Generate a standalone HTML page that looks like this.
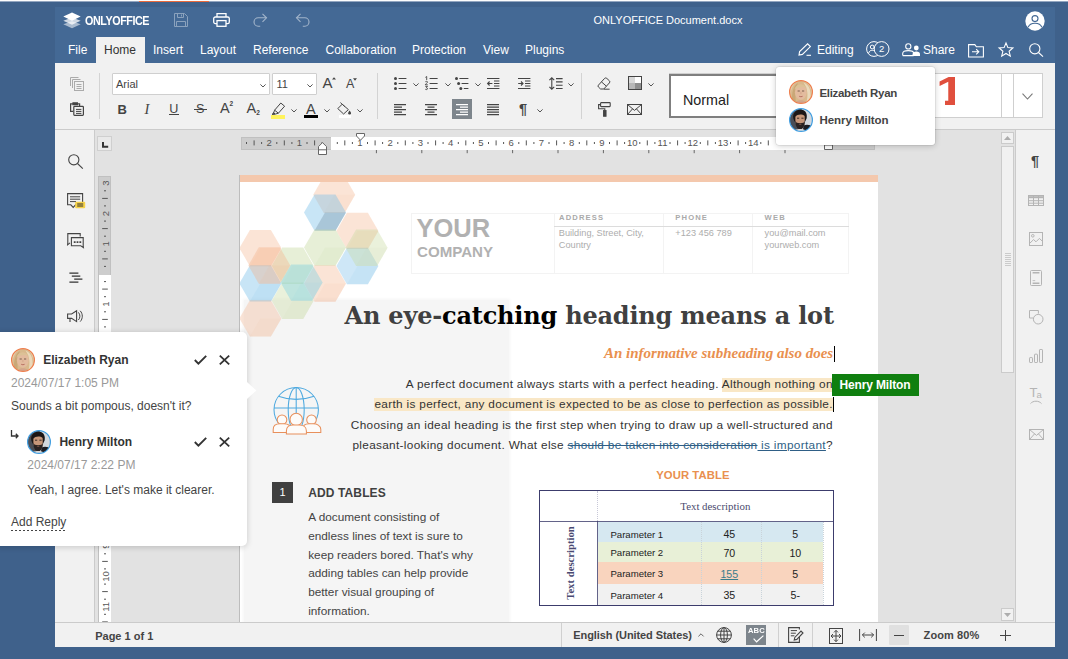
<!DOCTYPE html>
<html lang="en">
<head>
<meta charset="utf-8">
<title>ONLYOFFICE Document.docx</title>
<style>
*{box-sizing:border-box;margin:0;padding:0}
html,body{width:1068px;height:659px;overflow:hidden}
body{background:#3f618b;font-family:"Liberation Sans",Arial,sans-serif;font-size:12px;color:#444;position:relative}
.abs{position:absolute}
svg{position:absolute;overflow:visible}
#topstrip{left:0;top:0;width:1068px;height:2px;background:linear-gradient(#fdfdfd 0,#fdfdfd 1px,#93a6c0 1px,#93a6c0 2px)}
#topor{left:139px;top:1px;width:70px;height:1px;background:#ea6a3c}
#app{left:55px;top:7px;width:1000px;height:640px;background:#e2e2e2;overflow:hidden}
#hdr{left:0;top:0;width:1000px;height:56px;background:#446995}
.t{position:absolute;white-space:nowrap;line-height:1}
.w{color:#fff}
#tabhome{left:41px;top:30px;width:49px;height:27px;background:#f1f1f1}
#tb{left:0;top:56px;width:1000px;height:67px;background:#f1f1f1;border-bottom:1px solid #cbcbcb}
.sep{position:absolute;width:1px;background:#d3d3d3}
.ic{stroke:#444;fill:none;stroke-width:1}
#leftp{left:0;top:123px;width:40px;height:492px;background:#f1f1f1;border-right:1px solid #cbcbcb}
#rightp{left:960px;top:123px;width:40px;height:492px;background:#f1f1f1;border-left:1px solid #cbcbcb}
#status{left:0;top:615px;width:1000px;height:25px;background:#f1f1f1;border-top:1px solid #cbcbcb}
#page{left:184px;top:168px;width:639px;height:447px;background:#fff;border-left:1px solid #bdbdbd;overflow:hidden}
</style>
</head>
<body>
<svg width="0" height="0" style="left:0;top:0"><filter id="avb" x="-10%" y="-10%" width="120%" height="120%"><feGaussianBlur stdDeviation="0.55"/></filter></svg>
<div class="abs" id="topstrip"></div>
<div class="abs" id="topor"></div>
<div class="abs" id="app">
  <div class="abs" id="hdr"></div>
  
  <svg style="left:7.5px;top:5.3px" width="18" height="17" viewBox="0 0 17 16">
    <path d="M8.5 8.6 L0.3 11.6 L8.5 15.4 L16.7 11.6 Z" fill="#fff" opacity=".55"/>
    <path d="M8.5 5.2 L0.3 8.3 L8.5 12 L16.7 8.3 Z" fill="#fff" opacity=".75"/>
    <path d="M8.5 0.4 L0.3 4.3 L8.5 8.2 L16.7 4.3 Z" fill="#fff"/>
  </svg>
  <div class="t w" id="logotxt" style="left:29.5px;top:7.5px;font-size:12.2px;font-weight:bold;letter-spacing:-0.5px;transform:scaleX(.885);transform-origin:0 0">ONLYOFFICE</div>
  <!-- save -->
  <svg style="left:119px;top:6px;opacity:.38" width="14" height="14" viewBox="0 0 14 14" fill="none" stroke="#fff" stroke-width="1">
    <path d="M0.5 0.5 H10.5 L13.5 3.5 V13.5 H0.5 Z"/><path d="M3.5 0.5 V4.5 H9.5 V0.5"/><path d="M7.5 1.5 V3.5"/><path d="M2.5 13.5 V8.5 H11.5 V13.5"/>
  </svg>
  <!-- print -->
  <svg style="left:158px;top:6px" width="17" height="14" viewBox="0 0 17 14" fill="none" stroke="#fff" stroke-width="1.3">
    <path d="M4 4 V0.7 H13 V4"/><rect x="0.7" y="4" width="15.6" height="6.6" rx="1.6"/><rect x="4" y="7.6" width="9" height="5.7" fill="#446995"/>
  </svg>
  <!-- redo -->
  <svg style="left:198px;top:6px;opacity:.5" width="15" height="14" viewBox="0 0 15 14" fill="none" stroke="#fff" stroke-width="1.1">
    <path d="M9.5 0.8 L13.5 4.8 L9.5 8.8"/><path d="M13.3 4.8 H5.2 A4.2 4.2 0 0 0 5.2 13.2 H7.2"/>
  </svg>
  <!-- undo -->
  <svg style="left:240px;top:6px;opacity:.5" width="15" height="14" viewBox="0 0 15 14" fill="none" stroke="#fff" stroke-width="1.1">
    <path d="M5.5 0.8 L1.5 4.8 L5.5 8.8"/><path d="M1.7 4.8 H9.8 A4.2 4.2 0 0 1 9.8 13.2 H7.8"/>
  </svg>
  <div class="t w" id="doctitle" style="left:538.5px;top:8px;font-size:11px">ONLYOFFICE Document.docx</div>
  <!-- user avatar -->
  <svg style="left:969.5px;top:3.5px" width="20" height="20" viewBox="0 0 20 20">
    <circle cx="10" cy="10" r="9.7" fill="#fff"/>
    <circle cx="10" cy="7.6" r="3" fill="none" stroke="#446995" stroke-width="1.1"/>
    <path d="M3.2 16.2 C4.5 12.6 7.5 12.3 10 12.3 S15.5 12.6 16.8 16.2" fill="none" stroke="#446995" stroke-width="1.1"/>
  </svg>

  <div class="abs" id="tabhome"></div>
  
  <div class="t w" style="left:13px;top:37px">File</div>
  <div class="t" style="left:49px;top:37px;color:#333">Home</div>
  <div class="t w" style="left:98px;top:37px">Insert</div>
  <div class="t w" style="left:145px;top:37px">Layout</div>
  <div class="t w" style="left:198px;top:37px">Reference</div>
  <div class="t w" style="left:270.5px;top:37px">Collaboration</div>
  <div class="t w" style="left:357px;top:37px">Protection</div>
  <div class="t w" style="left:428px;top:37px">View</div>
  <div class="t w" style="left:470px;top:37px">Plugins</div>
  <!-- pencil -->
  <svg style="left:743px;top:36px" width="14" height="13" viewBox="0 0 14 13" fill="none" stroke="#fff" stroke-width="1.1">
    <path d="M1 12 L1.6 8.6 L9.6 0.8 L12.4 3.6 L4.4 11.4 Z"/><path d="M8.5 12.3 H13"/>
  </svg>
  <div class="t w" style="left:762px;top:37px">Editing</div>
  <!-- users -->
  <svg style="left:811px;top:34px" width="24" height="16" viewBox="0 0 24 16" fill="none" stroke="#fff" stroke-width="1">
    <circle cx="8" cy="8" r="7.4"/>
    <circle cx="15.6" cy="8" r="7.4" fill="#446995"/>
    <circle cx="6.2" cy="6" r="1.9"/><path d="M2.6 12.4 C3.2 9.6 5 9.3 6.2 9.3 S8 9.6 8.3 10"/>
    <text x="15.6" y="11.4" font-size="9.5" fill="#fff" stroke="none" text-anchor="middle" font-family="Liberation Sans, Arial, sans-serif">2</text>
  </svg>
  <!-- share -->
  <svg style="left:846.5px;top:35.5px" width="19" height="14" viewBox="0 0 19 14" fill="none" stroke="#fff" stroke-width="1.1">
    <circle cx="6.3" cy="3.4" r="2.6"/><path d="M0.7 12.6 V10.6 C0.7 8.4 2.6 7.6 6.3 7.6 S11.6 8.4 11.8 10.2 M0.7 12.6 H11.6"/>
    <circle cx="14.3" cy="5" r="2.4" fill="#fff" stroke="none"/><path d="M10.6 13 V11.3 C10.6 9.4 12 8.6 14.3 8.6 S18 9.4 18 11.3 V13 Z" fill="#fff" stroke="none"/>
  </svg>
  <div class="t w" style="left:868px;top:37px">Share</div>
  <!-- folder -->
  <svg style="left:913px;top:36.5px" width="16" height="14" viewBox="0 0 16 14" fill="none" stroke="#fff" stroke-width="1.1">
    <path d="M0.6 13 V0.6 H6.8 L8.4 2.8 H15.4 V13 Z"/><path d="M4 7.8 H10.6 M8.2 5.2 L10.8 7.8 L8.2 10.4"/>
  </svg>
  <!-- star -->
  <svg style="left:943px;top:35px" width="16" height="15" viewBox="0 0 16 15" fill="none" stroke="#fff" stroke-width="1.1" stroke-linejoin="miter">
    <path d="M8 1 L9.9 5.6 L14.9 6 L11.1 9.3 L12.3 14.1 L8 11.5 L3.7 14.1 L4.9 9.3 L1.1 6 L6.1 5.6 Z"/>
  </svg>
  <!-- search -->
  <svg style="left:974px;top:35.5px" width="15" height="14" viewBox="0 0 15 14" fill="none" stroke="#fff" stroke-width="1.1">
    <circle cx="5.8" cy="5.8" r="5.1"/><path d="M9.5 9.5 L14 13.6"/>
  </svg>

  <div class="abs" id="tb"></div>
  
  <svg style="left:15px;top:69.5px;opacity:.4" width="14" height="14" viewBox="0 0 14 14" fill="none" stroke="#444" stroke-width="1"><path d="M0.5 9 V0.5 H8.5 M2.5 11 V2.5 H10.5"/><rect x="4.5" y="4.5" width="9" height="9" fill="#f1f1f1"/><path d="M6.5 7.5 H11.5 M6.5 9.5 H11.5 M6.5 11.5 H11.5"/></svg>
  <svg style="left:15px;top:95px" width="14" height="14" viewBox="0 0 14 14" fill="none" stroke="#444" stroke-width="1.2"><path d="M3.2 9.4 H0.6 V1.8 H9.6 V4"/><path d="M3 0.9 H7.4 V2.6 H3 Z" fill="#444"/><rect x="3.8" y="4.4" width="9.6" height="9" rx="0.8" fill="#f1f1f1"/><path d="M6 7.4 H11.4 M6 9.4 H11.4 M6 11.4 H11.4" stroke-width="1"/></svg>
  <div class="sep" style="left:44px;top:66px;height:46px"></div>
  <div class="sep" style="left:322px;top:66px;height:46px"></div>
  <div class="sep" style="left:526px;top:66px;height:46px"></div>
  <div class="abs" style="left:57px;top:66px;width:158px;height:22px;background:#fff;border:1px solid #cfcfcf;border-radius:1px"></div>
  <div class="t" style="left:61px;top:72px;font-size:11px;color:#444">Arial</div>
  <svg style="left:205.0px;top:76.5px" width="6" height="4" viewBox="0 0 6 4" fill="none" stroke="#444" stroke-width="0.9"><path d="M0.4 0.4 L3 3 L5.6 0.4"/></svg>

  <div class="abs" style="left:217px;top:66px;width:45px;height:22px;background:#fff;border:1px solid #cfcfcf;border-radius:1px"></div>
  <div class="t" style="left:221.5px;top:72px;font-size:11px;color:#444">11</div>
  <svg style="left:252.0px;top:76.5px" width="6" height="4" viewBox="0 0 6 4" fill="none" stroke="#444" stroke-width="0.9"><path d="M0.4 0.4 L3 3 L5.6 0.4"/></svg>

  <div class="t" style="left:267.5px;top:68.3px;font-size:15px;color:#444">A</div>
  <svg style="left:276.6px;top:70px" width="4" height="3" viewBox="0 0 4 3"><path d="M0 2.6 L2 0.2 L4 2.6 Z" fill="#444"/></svg>
  <div class="t" style="left:291px;top:70.6px;font-size:12.5px;color:#444">A</div>
  <svg style="left:298.2px;top:70.6px" width="4" height="3" viewBox="0 0 4 3"><path d="M0 0.3 L2 2.7 L4 0.3 Z" fill="#444"/></svg>
  <div class="t" style="left:62.5px;top:96px;font-size:13px;font-weight:bold;color:#444">B</div>
  <div class="t" style="left:89.6px;top:95.4px;font-size:14.5px;font-style:italic;color:#444;font-family:'Liberation Serif',serif">I</div>
  <div class="t" style="left:114.3px;top:95.8px;font-size:12.6px;color:#444">U</div><div class="abs" style="left:114px;top:107.2px;width:10px;height:1px;background:#444"></div>
  <div class="t" style="left:141px;top:95.8px;font-size:12.6px;color:#444">S</div><div class="abs" style="left:139px;top:102px;width:12.5px;height:1px;background:#444"></div>
  <div class="t" style="left:165px;top:94.3px;font-size:14.5px;color:#444">A</div><div class="t" style="left:174.6px;top:94.4px;font-size:6.5px;font-weight:bold;color:#444">2</div>
  <div class="t" style="left:191.6px;top:94.3px;font-size:14.5px;color:#444">A</div><div class="t" style="left:201.2px;top:102.6px;font-size:6.5px;font-weight:bold;color:#444">2</div>
  <svg style="left:216px;top:94.5px" width="15" height="13" viewBox="0 0 15 13" fill="none" stroke="#444" stroke-width="1"><path d="M3.6 8.2 L9.8 1 L13.6 4.2 L7.4 11.2 Z"/><path d="M3.6 8.2 L2.6 11 L4.6 12 L7.4 11.2"/><path d="M1 12.4 L2.8 10.8 L4 12.2 Z" fill="#444"/></svg>
  <div class="abs" style="left:215.6px;top:108px;width:14.4px;height:3.5px;background:#fff35c"></div>
  <svg style="left:236.0px;top:102.0px" width="6" height="4" viewBox="0 0 6 4" fill="none" stroke="#444" stroke-width="0.9"><path d="M0.4 0.4 L3 3 L5.6 0.4"/></svg>

  <div class="t" style="left:251px;top:94.6px;font-size:14.5px;color:#444">A</div>
  <div class="abs" style="left:249px;top:108px;width:14.2px;height:3.2px;background:#000"></div>
  <svg style="left:269.0px;top:102.0px" width="6" height="4" viewBox="0 0 6 4" fill="none" stroke="#444" stroke-width="0.9"><path d="M0.4 0.4 L3 3 L5.6 0.4"/></svg>

  <svg style="left:282px;top:94.5px" width="15" height="13" viewBox="0 0 15 13" fill="none" stroke="#444" stroke-width="1"><path d="M5.2 2.2 L11.4 7.6 L6.6 12 L0.8 6.6 Z"/><path d="M3.4 0.6 L7.8 4.6"/><path d="M12.6 8.6 C13.6 10 14 10.6 14 11.2 A1.4 1.4 0 0 1 11.2 11.2 C11.2 10.6 11.6 10 12.6 8.6 Z" fill="#444" stroke="none"/></svg>
  <div class="abs" style="left:283.6px;top:108px;width:12.2px;height:3.2px;background:#fff"></div>
  <svg style="left:302.0px;top:102.0px" width="6" height="4" viewBox="0 0 6 4" fill="none" stroke="#444" stroke-width="0.9"><path d="M0.4 0.4 L3 3 L5.6 0.4"/></svg>

  <svg style="left:339px;top:70px" width="13" height="13" viewBox="0 0 13 13" fill="#444" stroke="#444"><circle cx="1.5" cy="1.5" r="1.5" stroke="none"/><circle cx="1.5" cy="6.5" r="1.5" stroke="none"/><circle cx="1.5" cy="11.5" r="1.5" stroke="none"/><path d="M4.6 1.5 H12.4 M4.6 6.5 H12.4 M4.6 11.5 H12.4" stroke-width="1.15"/></svg>
  <svg style="left:358.3px;top:76.2px" width="6" height="4" viewBox="0 0 6 4" fill="none" stroke="#444" stroke-width="0.9"><path d="M0.4 0.4 L3 3 L5.6 0.4"/></svg>

  <svg style="left:369.5px;top:69px" width="13" height="14" viewBox="0 0 13 14" fill="none" stroke="#444" stroke-width="1.15"><path d="M4.6 2.5 H12.6 M4.6 7.5 H12.6 M4.6 12.5 H12.6"/><path d="M0.4 1.4 L1.7 0.5 V4" stroke-width="0.9"/><path d="M0.3 5.9 C0.6 5.1 2.6 5.1 2.6 6.1 C2.6 7 0.4 7.6 0.3 8.8 H2.8" stroke-width="0.9"/><path d="M0.3 10.4 H2.5 L1.3 11.7 C2.8 11.6 3 13.6 1.4 13.6 C0.8 13.6 0.4 13.4 0.2 13" stroke-width="0.9"/></svg>
  <svg style="left:389.5px;top:76.2px" width="6" height="4" viewBox="0 0 6 4" fill="none" stroke="#444" stroke-width="0.9"><path d="M0.4 0.4 L3 3 L5.6 0.4"/></svg>

  <svg style="left:400px;top:70px" width="14" height="13" viewBox="0 0 14 13" fill="#444" stroke="#444"><circle cx="1.5" cy="1.5" r="1.5" stroke="none"/><circle cx="3.6" cy="6.5" r="1.5" stroke="none"/><circle cx="5.8" cy="11.5" r="1.5" stroke="none"/><path d="M4.4 1.5 H13.4 M6.6 6.5 H13.4 M8.8 11.5 H13.4" stroke-width="1.15"/></svg>
  <svg style="left:420.3px;top:76.2px" width="6" height="4" viewBox="0 0 6 4" fill="none" stroke="#444" stroke-width="0.9"><path d="M0.4 0.4 L3 3 L5.6 0.4"/></svg>

  <svg style="left:432px;top:70px" width="13" height="12" viewBox="0 0 13 12" fill="none" stroke="#444" stroke-width="1.1"><path d="M0 1.5 H12.4 M7 4 H12.4 M7 6.5 H12.4 M7 9 H12.4 M0 11.5 H12.4"/><path d="M0.6 6.5 H5.4 M2.6 4.5 L0.6 6.5 L2.6 8.5"/></svg>
  <svg style="left:463px;top:70px" width="13" height="12" viewBox="0 0 13 12" fill="none" stroke="#444" stroke-width="1.1"><path d="M0 1.5 H12.4 M7 4 H12.4 M7 6.5 H12.4 M7 9 H12.4 M0 11.5 H12.4"/><path d="M0.2 6.5 H5 M3 4.5 L5 6.5 L3 8.5"/></svg>
  <svg style="left:493.5px;top:69.6px" width="14" height="13" viewBox="0 0 14 13" fill="none" stroke="#444" stroke-width="1.1"><path d="M2.8 0.8 V12.2 M0.4 3.2 L2.8 0.8 L5.2 3.2 M0.4 9.8 L2.8 12.2 L5.2 9.8"/><path d="M7 1.6 H13.6 M7 4.9 H13.6 M7 8.2 H13.6 M7 11.5 H13.6"/></svg>
  <svg style="left:513.0px;top:76.2px" width="6" height="4" viewBox="0 0 6 4" fill="none" stroke="#444" stroke-width="0.9"><path d="M0.4 0.4 L3 3 L5.6 0.4"/></svg>

  <svg style="left:339px;top:97px" width="12" height="12" viewBox="0 0 12 12" fill="none" stroke="#444" stroke-width="1.15"><path d="M0 0.6 H12 M0 3.1 H8 M0 5.6 H12 M0 8.1 H8 M0 10.6 H12"/></svg>
  <svg style="left:370px;top:97px" width="12" height="12" viewBox="0 0 12 12" fill="none" stroke="#444" stroke-width="1.15"><path d="M0 0.6 H12 M2.5 3.1 H9.5 M0 5.6 H12 M2.5 8.1 H9.5 M0 10.6 H12"/></svg>
  <div class="abs" style="left:397px;top:92px;width:20px;height:20px;background:#7d858c"></div>
  <svg style="left:401px;top:97px" width="12" height="12" viewBox="0 0 12 12" fill="none" stroke="#fff" stroke-width="1.15"><path d="M0 0.6 H12 M4 3.1 H12 M0 5.6 H12 M4 8.1 H12 M0 10.6 H12"/></svg>
  <svg style="left:432px;top:97px" width="12" height="12" viewBox="0 0 12 12" fill="none" stroke="#444" stroke-width="1.15"><path d="M0 0.6 H12 M0 3.1 H12 M0 5.6 H12 M0 8.1 H12 M0 10.6 H12"/></svg>
  <div class="t" style="left:464px;top:94.8px;font-size:14.6px;font-weight:bold;color:#444">¶</div>
  <svg style="left:482.0px;top:102.0px" width="6" height="4" viewBox="0 0 6 4" fill="none" stroke="#444" stroke-width="0.9"><path d="M0.4 0.4 L3 3 L5.6 0.4"/></svg>

  <svg style="left:542px;top:69.5px" width="14" height="13" viewBox="0 0 14 13" fill="none" stroke="#444" stroke-width="1"><path d="M1.4 8.2 L7.6 1.4 Q8.6 0.4 9.8 1.4 L12.4 3.8 Q13.4 4.8 12.4 5.9 L6.8 12 H3.6 L1.4 10 Q0.6 9.1 1.4 8.2 Z"/><path d="M4.4 4.8 L9.4 9.2"/><path d="M6.8 12.2 H12.6"/></svg>
  <svg style="left:573px;top:69.3px" width="14" height="14" viewBox="0 0 14 14"><rect x="0.5" y="0.5" width="13" height="13" fill="#fff" stroke="#444"/><rect x="1" y="1" width="6" height="6" fill="#d8d8d8"/><rect x="7" y="7" width="6" height="6" fill="#8f8f8f"/><rect x="1" y="7" width="6" height="6" fill="#b8b8b8"/></svg>
  <svg style="left:593.0px;top:76.2px" width="6" height="4" viewBox="0 0 6 4" fill="none" stroke="#444" stroke-width="0.9"><path d="M0.4 0.4 L3 3 L5.6 0.4"/></svg>

  <svg style="left:543px;top:94.8px" width="13" height="15" viewBox="0 0 13 15" fill="none" stroke="#444" stroke-width="1.1"><rect x="2.6" y="0.6" width="9.6" height="4" rx="0.6"/><path d="M2.6 2.6 H0.6 V6.8 H6.8 V8.6"/><rect x="5.6" y="8.6" width="2.4" height="5.6" fill="#444"/></svg>
  <svg style="left:572.4px;top:97px" width="15" height="11" viewBox="0 0 15 11" fill="none" stroke="#444" stroke-width="1"><rect x="0.5" y="0.5" width="14" height="10"/><path d="M0.5 0.5 L7.5 6.4 L14.5 0.5 M0.5 10.5 L5.6 4.8 M14.5 10.5 L9.4 4.8"/></svg>
  <div class="abs" style="left:613.5px;top:66.3px;width:374px;height:45px;background:#fff;border:1px solid #cfcfcf"></div>
  <div class="abs" style="left:946px;top:66.3px;width:13px;height:45px;border-left:1px solid #cfcfcf;border-right:1px solid #cfcfcf"></div>
  <div class="abs" style="left:613.5px;top:66.8px;width:112px;height:44px;border:2px solid #7f7f7f;border-right:none"></div>
  <div class="t" style="left:628px;top:86.2px;font-size:14.3px;color:#222">Normal</div>
  <div class="abs" id="big1w" style="left:879.6px;top:65px;width:20.9px;height:36px;overflow:hidden"><div class="t" id="big1" style="left:1.2px;top:-1.4px;font-size:40.5px;font-weight:bold;color:#e04f3d;transform:scaleX(1.3);transform-origin:0 0">1</div><div class="abs" style="left:0;top:27.6px;width:10.6px;height:8px;background:#fff"></div></div>
  <svg style="left:967.3px;top:86px" width="11" height="7" viewBox="0 0 11 7" fill="none" stroke="#777" stroke-width="1.1"><path d="M0.5 0.6 L5.5 6 L10.5 0.6"/></svg>

  
  <div class="abs" style="left:42px;top:129px;width:15px;height:15px;background:#e9e9e9;border:1px solid #cfcfcf"></div>
  <svg style="left:46.6px;top:135px" width="7" height="6" viewBox="0 0 7 6"><path d="M1 0 V4.8 H6.2" fill="none" stroke="#333" stroke-width="2"/></svg>
  <div class="abs" style="left:185.5px;top:129.5px;width:634px;height:13px;background:#cdcdcd;border:1px solid #c0c0c0"></div>
  <div class="abs" style="left:275.5px;top:130px;width:498.3px;height:12.5px;background:#fff"></div>
  <svg style="left:185px;top:129.5px" width="640" height="14" viewBox="0 0 640 14"><path d="M6.5 5 V7 M14.1 3.4 V8.4 M21.6 5 V7 M36.8 5 V7 M44.3 3.4 V8.4 M51.9 5 V7 M67.0 5 V7 M74.6 3.4 V8.4 M82.1 5 V7 M97.3 5 V7 M104.8 3.4 V8.4 M112.4 5 V7 M127.5 5 V7 M135.1 3.4 V8.4 M142.6 5 V7 M157.8 5 V7 M165.3 3.4 V8.4 M172.9 5 V7 M188.0 5 V7 M195.6 3.4 V8.4 M203.1 5 V7 M218.3 5 V7 M225.8 3.4 V8.4 M233.4 5 V7 M248.5 5 V7 M256.1 3.4 V8.4 M263.6 5 V7 M278.8 5 V7 M286.3 3.4 V8.4 M293.9 5 V7 M309.0 5 V7 M316.6 3.4 V8.4 M324.1 5 V7 M339.3 5 V7 M346.8 3.4 V8.4 M354.4 5 V7 M369.5 5 V7 M377.1 3.4 V8.4 M384.6 5 V7 M399.8 5 V7 M407.3 3.4 V8.4 M414.9 5 V7 M430.0 5 V7 M437.6 3.4 V8.4 M445.1 5 V7 M460.3 5 V7 M467.8 3.4 V8.4 M475.4 5 V7 M490.5 5 V7 M498.1 3.4 V8.4 M505.6 5 V7 M520.8 5 V7 M528.3 3.4 V8.4 " stroke="#555" stroke-width="1" fill="none"/><g font-size="9.5" fill="#555" font-family="Liberation Sans, Arial, sans-serif"><text x="29.2" y="9.3" text-anchor="middle">2</text><text x="59.4" y="9.3" text-anchor="middle">1</text><text x="119.9" y="9.3" text-anchor="middle">1</text><text x="150.2" y="9.3" text-anchor="middle">2</text><text x="180.4" y="9.3" text-anchor="middle">3</text><text x="210.7" y="9.3" text-anchor="middle">4</text><text x="240.9" y="9.3" text-anchor="middle">5</text><text x="271.2" y="9.3" text-anchor="middle">6</text><text x="301.5" y="9.3" text-anchor="middle">7</text><text x="331.7" y="9.3" text-anchor="middle">8</text><text x="362.0" y="9.3" text-anchor="middle">9</text><text x="392.2" y="9.3" text-anchor="middle">10</text><text x="422.5" y="9.3" text-anchor="middle">11</text><text x="452.7" y="9.3" text-anchor="middle">12</text><text x="483.0" y="9.3" text-anchor="middle">13</text><text x="513.2" y="9.3" text-anchor="middle">14</text></g></svg>
  <svg style="left:185px;top:143.3px" width="640" height="4" viewBox="0 0 640 4"><path d="M136.4 0 V3.2 M181.8 0 V3.2 M227.2 0 V3.2 M272.6 0 V3.2 M318.0 0 V3.2 M363.4 0 V3.2 M408.8 0 V3.2 M454.2 0 V3.2 M499.6 0 V3.2 M545.0 0 V3.2" stroke="#666" stroke-width="1" fill="none"/></svg>
  <svg style="left:263.3px;top:134.8px" width="9" height="13" viewBox="0 0 9 13"><path d="M0.5 12.5 V4.6 L4.5 0.6 L8.5 4.6 V12.5 Z M0.5 7.8 H8.5" fill="#fff" stroke="#666" stroke-width="1"/></svg>
  <svg style="left:301.3px;top:125.8px" width="9" height="8" viewBox="0 0 9 8"><path d="M0.5 0.5 H8.5 V3 L4.5 7.2 L0.5 3 Z" fill="#fff" stroke="#666" stroke-width="1"/></svg>
  <svg style="left:769.3px;top:137.2px" width="9" height="6" viewBox="0 0 9 6"><path d="M0.5 5.5 V1 H8.5 V5.5 Z" fill="#fff" stroke="#666" stroke-width="1"/></svg>
  <div class="abs" style="left:43px;top:169px;width:12.8px;height:460px;background:#cdcdcd;border:1px solid #c0c0c0"></div>
  <div class="abs" style="left:44px;top:267.5px;width:11.5px;height:360px;background:#fff"></div>
  <svg style="left:43.5px;top:169px" width="13" height="450" viewBox="0 0 13 450"><path d="M5 14.8 H7 M3.2 22.4 H8.8 M5 29.9 H7 M5 45.1 H7 M3.2 52.6 H8.8 M5 60.2 H7 M5 75.3 H7 M3.2 82.9 H8.8 M5 90.4 H7 M5 105.6 H7 M3.2 113.1 H8.8 M5 120.7 H7 M5 135.8 H7 M3.2 143.4 H8.8 M5 150.9 H7 M5 166.1 H7 M3.2 173.6 H8.8 M5 181.2 H7 M5 196.3 H7 M3.2 203.9 H8.8 M5 211.4 H7 M5 226.6 H7 M3.2 234.1 H8.8 M5 241.7 H7 M5 256.8 H7 M3.2 264.4 H8.8 M5 271.9 H7 M5 287.1 H7 M3.2 294.6 H8.8 M5 302.2 H7 M5 317.3 H7 M3.2 324.9 H8.8 M5 332.4 H7 M5 347.6 H7 M3.2 355.1 H8.8 M5 362.7 H7 M5 377.8 H7 M3.2 385.4 H8.8 M5 392.9 H7 M5 408.1 H7 M3.2 415.6 H8.8 M5 423.2 H7 M5 438.3 H7 M3.2 445.9 H8.8" stroke="#555" stroke-width="1" fill="none"/><g font-size="9.5" fill="#555" font-family="Liberation Sans, Arial, sans-serif"><text transform="translate(9.6 7.2) rotate(-90)" text-anchor="middle">3</text><text transform="translate(9.6 37.5) rotate(-90)" text-anchor="middle">2</text><text transform="translate(9.6 67.8) rotate(-90)" text-anchor="middle">1</text><text transform="translate(9.6 128.2) rotate(-90)" text-anchor="middle">1</text><text transform="translate(9.6 158.5) rotate(-90)" text-anchor="middle">2</text><text transform="translate(9.6 188.8) rotate(-90)" text-anchor="middle">3</text><text transform="translate(9.6 219.0) rotate(-90)" text-anchor="middle">4</text><text transform="translate(9.6 249.2) rotate(-90)" text-anchor="middle">5</text><text transform="translate(9.6 279.5) rotate(-90)" text-anchor="middle">6</text><text transform="translate(9.6 309.8) rotate(-90)" text-anchor="middle">7</text><text transform="translate(9.6 340.0) rotate(-90)" text-anchor="middle">8</text><text transform="translate(9.6 370.2) rotate(-90)" text-anchor="middle">9</text><text transform="translate(9.6 400.5) rotate(-90)" text-anchor="middle">10</text><text transform="translate(9.6 430.8) rotate(-90)" text-anchor="middle">11</text></g></svg>
  <div class="abs" style="left:946px;top:124.5px;width:13px;height:12.5px;background:#f1f1f1;border:1px solid #cbcbcb"></div>
  <svg style="left:949px;top:128.6px" width="7" height="4" viewBox="0 0 7 4"><path d="M0 4 L3.5 0 L7 4 Z" fill="#adadad"/></svg>
  <div class="abs" style="left:946px;top:138.5px;width:13px;height:227.5px;background:#f1f1f1;border:1px solid #cbcbcb"></div>
  <svg style="left:949.5px;top:245px" width="6" height="15" viewBox="0 0 6 15"><path d="M0 1.5 H6 M0 3.5 H6 M0 5.5 H6 M0 7.5 H6 M0 9.5 H6 M0 11.5 H6 M0 13.5 H6" stroke="#cbcbcb" stroke-width="1"/></svg>
  <div class="abs" style="left:946px;top:601px;width:13px;height:12.5px;background:#f1f1f1;border:1px solid #cbcbcb"></div>
  <svg style="left:949px;top:605.6px" width="7" height="4" viewBox="0 0 7 4"><path d="M0 0 L3.5 4 L7 0 Z" fill="#adadad"/></svg>

  <div class="abs" id="page">
  
  <div class="abs" style="left:0;top:0;width:638px;height:7px;background:#f4c8ad"></div>
  <div class="abs" id="shade" style="left:4px;top:125px;width:265px;height:330px;background:#f5f5f5;box-shadow:0 0 3px 1px #f5f5f5"></div>
  <svg style="left:0;top:7px;overflow:hidden" width="200" height="200" viewBox="0 7 200 200"><polygon points="73.2,19.7 83.7,1.5 104.7,1.5 115.2,19.7 104.7,37.9 83.7,37.9" fill="#f3b088" fill-opacity="0.344"/><polygon points="94.2,19.7 115.2,19.7 104.7,37.9 83.7,37.9" fill="#f3b088" fill-opacity="0.066"/><polygon points="-0.6,73.1 9.9,54.9 30.9,54.9 41.4,73.1 30.9,91.3 9.9,91.3" fill="#f3b088" fill-opacity="0.344"/><polygon points="20.4,73.1 41.4,73.1 30.9,91.3 9.9,91.3" fill="#f3b088" fill-opacity="0.082"/><polygon points="-0.6,108.4 9.9,90.2 30.9,90.2 41.4,108.4 30.9,126.6 9.9,126.6" fill="#79bfe8" fill-opacity="0.410"/><polygon points="20.4,108.4 41.4,108.4 30.9,126.6 9.9,126.6" fill="#79bfe8" fill-opacity="0.131"/><polygon points="-0.6,143.4 9.9,125.2 30.9,125.2 41.4,143.4 30.9,161.6 9.9,161.6" fill="#f3b088" fill-opacity="0.328"/><polygon points="20.4,143.4 41.4,143.4 30.9,161.6 9.9,161.6" fill="#f3b088" fill-opacity="0.066"/><polygon points="31.7,90.7 42.2,72.5 63.2,72.5 73.7,90.7 63.2,108.9 42.2,108.9" fill="#c5d89e" fill-opacity="0.410"/><polygon points="52.7,90.7 73.7,90.7 63.2,108.9 42.2,108.9" fill="#c5d89e" fill-opacity="0.082"/><polygon points="31.7,125.8 42.2,107.6 63.2,107.6 73.7,125.8 63.2,144.0 42.2,144.0" fill="#c5d89e" fill-opacity="0.369"/><polygon points="52.7,125.8 73.7,125.8 63.2,144.0 42.2,144.0" fill="#c5d89e" fill-opacity="0.066"/><polygon points="64.0,37.6 74.5,19.4 95.5,19.4 106.0,37.6 95.5,55.8 74.5,55.8" fill="#79bfe8" fill-opacity="0.410"/><polygon points="85.0,37.6 106.0,37.6 95.5,55.8 74.5,55.8" fill="#7f99ad" fill-opacity="0.410"/><polygon points="64.0,72.6 74.5,54.4 95.5,54.4 106.0,72.6 95.5,90.8 74.5,90.8" fill="#c5d89e" fill-opacity="0.410"/><polygon points="85.0,72.6 106.0,72.6 95.5,90.8 74.5,90.8" fill="#c5d89e" fill-opacity="0.115"/><polygon points="64.0,108.5 74.5,90.3 95.5,90.3 106.0,108.5 95.5,126.7 74.5,126.7" fill="#f3b088" fill-opacity="0.344"/><polygon points="85.0,108.5 106.0,108.5 95.5,126.7 74.5,126.7" fill="#f3b088" fill-opacity="0.082"/><polygon points="96.4,55.9 106.9,37.7 127.9,37.7 138.4,55.9 127.9,74.1 106.9,74.1" fill="#f3b088" fill-opacity="0.344"/><polygon points="117.4,55.9 138.4,55.9 127.9,74.1 106.9,74.1" fill="#f3b088" fill-opacity="0.082"/><polygon points="96.4,91.0 106.9,72.8 127.9,72.8 138.4,91.0 127.9,109.2 106.9,109.2" fill="#79bfe8" fill-opacity="0.369"/><polygon points="117.4,91.0 138.4,91.0 127.9,109.2 106.9,109.2" fill="#79bfe8" fill-opacity="0.098"/><polygon points="105.6,72.8 116.1,54.6 137.1,54.6 147.6,72.8 137.1,91.0 116.1,91.0" fill="#c5d89e" fill-opacity="0.369"/><polygon points="126.6,72.8 147.6,72.8 137.1,91.0 116.1,91.0" fill="#c5d89e" fill-opacity="0.066"/><polygon points="8.3,90.5 18.8,72.3 39.8,72.3 50.3,90.5 39.8,108.7 18.8,108.7" fill="#f3b088" fill-opacity="0.369"/><polygon points="29.3,90.5 50.3,90.5 39.8,108.7 18.8,108.7" fill="#f3b088" fill-opacity="0.098"/><polygon points="40.6,107.6 51.1,89.4 72.1,89.4 82.6,107.6 72.1,125.8 51.1,125.8" fill="#7fd0e2" fill-opacity="0.410"/><polygon points="61.6,107.6 82.6,107.6 72.1,125.8 51.1,125.8" fill="#7fd0e2" fill-opacity="0.082"/></svg>
  <div class="abs" style="left:171px;top:38px;width:438px;height:61px;border:1px solid #f3f3f3"></div>
  <div class="abs" style="left:313.5px;top:38px;width:1px;height:61px;background:#f3f3f3"></div>
  <div class="abs" style="left:423px;top:38px;width:1px;height:61px;background:#f3f3f3"></div>
  <div class="abs" style="left:511.7px;top:38px;width:1px;height:61px;background:#f3f3f3"></div>
  <div class="abs" style="left:313.5px;top:51px;width:295px;height:1px;background:#dcdcdc"></div>
  <div class="t" style="left:176.5px;top:41px;font-size:25.5px;font-weight:bold;color:#b1b1b1">YOUR</div>
  <div class="t" style="left:177px;top:69.3px;font-size:15.1px;font-weight:bold;color:#b1b1b1">COMPANY</div>
  <div class="t" style="left:319px;top:39.2px;font-size:7.6px;font-weight:bold;letter-spacing:1.15px;color:#aaa">ADDRESS</div>
  <div class="t" style="left:435.3px;top:39.2px;font-size:7.6px;font-weight:bold;letter-spacing:1.15px;color:#aaa">PHONE</div>
  <div class="t" style="left:524.6px;top:39.2px;font-size:7.6px;font-weight:bold;letter-spacing:1.15px;color:#aaa">WEB</div>
  <div class="t" style="left:318.8px;top:54.2px;font-size:9.2px;color:#adadad">Building, Street, City,</div>
  <div class="t" style="left:318.8px;top:65.6px;font-size:9.2px;color:#adadad">Country</div>
  <div class="t" style="left:435.3px;top:54.2px;font-size:9.2px;color:#adadad">+123 456 789</div>
  <div class="t" style="left:524.6px;top:54.2px;font-size:9.2px;color:#adadad">you@mail.com</div>
  <div class="t" style="left:524.6px;top:65.6px;font-size:9.2px;color:#adadad">yourweb.com</div>
  <div class="t" id="h1" style="left:104.5px;top:129.2px;font-family:'DejaVu Serif','Liberation Serif',serif;font-size:24px;font-weight:bold;letter-spacing:-0.2px;color:#404040">An eye-<span style="color:#000">catching</span> heading means a lot</div>
  <div class="t" id="h2" style="left:364px;top:170.5px;font-family:'Liberation Serif',serif;font-size:15px;font-weight:bold;font-style:italic;color:#e9904f">An informative subheading also does</div>
  <div class="abs" style="left:593.5px;top:171px;width:1px;height:16px;background:#000"></div>
  <div class="abs" style="left:482px;top:202.5px;width:111px;height:14px;background:#f9e7c6"></div>
  <div class="abs" style="left:133.5px;top:222.6px;width:459.5px;height:13.4px;background:#f9e7c6"></div>
  <div class="t" style="right:45.2px;top:203.6px;font-size:11.8px;letter-spacing:0.32px;color:#333">A perfect document always starts with a perfect heading. Although nothing on</div>
  <div class="t" style="right:45.2px;top:223.8px;font-size:11.8px;letter-spacing:0.32px;color:#333">earth is perfect, any document is expected to be as close to perfection as possible.</div>
  <div class="t" style="right:45.2px;top:244.7px;font-size:11.8px;letter-spacing:0.32px;color:#333">Choosing an ideal heading is the first step when trying to draw up a well-structured and</div>
  <div class="t" style="right:45.2px;top:265px;font-size:11.8px;letter-spacing:0.32px;color:#333">pleasant-looking document. What else <span style="color:#2f5f86;text-decoration:line-through">should be taken into consideration</span><span style="color:#2f5f86;text-decoration:underline"> is important</span>?</div>
  <div class="abs" style="left:593px;top:222px;width:1px;height:15px;background:#000"></div>
  <svg style="left:32px;top:211px" width="52" height="50" viewBox="0 0 52 50" fill="none" stroke-width="1.05">
<g stroke="#4ea9df"><circle cx="24.2" cy="23.7" r="22.2"/><ellipse cx="24.2" cy="23.7" rx="8" ry="22.2"/><path d="M24.2 1.5 V40 M2 22 H46.4 M6.3 10.2 Q24.2 16.6 42.1 10.2"/></g>
<g stroke="#e8905c" fill="#fdfbf9"><circle cx="10" cy="33.8" r="4.8"/><path d="M1.2 46.4 V43.4 C1.2 39.4 4.6 37.8 8 37.8 H12 C15.4 37.8 18.6 39.4 18.6 43.4 V46.4 Z"/><circle cx="39.5" cy="33.8" r="4.8"/><path d="M30.6 46.4 V43.4 C30.6 39.4 33.8 37.8 37.2 37.8 H41.2 C44.6 37.8 48.8 39.4 48.8 43.4 V46.4 Z"/><circle cx="24.2" cy="33.5" r="6.2"/><path d="M14.4 48 V45 C14.4 41 17.4 39 21.2 39 H27.2 C31 39 34.4 41 34.4 45 V48 Z"/></g></svg>
  <div class="abs" style="left:32px;top:307px;width:21.3px;height:21px;background:#404040"></div>
  <div class="t" style="left:39.6px;top:312.2px;font-size:11px;color:#fff">1</div>
  <div class="t" style="left:68.2px;top:312px;font-size:12px;font-weight:bold;letter-spacing:0.12px;color:#404040">ADD TABLES</div>
  <div class="t" style="left:68.2px;top:336.7px;font-size:11.8px;color:#444">A document consisting of</div>
  <div class="t" style="left:68.2px;top:355.6px;font-size:11.8px;color:#444">endless lines of text is sure to</div>
  <div class="t" style="left:68.2px;top:374.5px;font-size:11.8px;color:#444">keep readers bored. That&#39;s why</div>
  <div class="t" style="left:68.2px;top:393.4px;font-size:11.8px;color:#444">adding tables can help provide</div>
  <div class="t" style="left:68.2px;top:412.3px;font-size:11.8px;color:#444">better visual grouping of</div>
  <div class="t" style="left:68.2px;top:431.2px;font-size:11.8px;color:#444">information.</div>
  <div class="t" style="left:416.2px;top:295px;font-size:11.3px;font-weight:bold;letter-spacing:0.08px;color:#e9904f">YOUR TABLE</div>
  <div class="abs" style="left:358px;top:347px;width:224.5px;height:20.6px;background:#d6e8f1"></div>
  <div class="abs" style="left:358px;top:367px;width:224.5px;height:21.1px;background:#e8f0d7"></div>
  <div class="abs" style="left:358px;top:387px;width:224.5px;height:22.6px;background:#f9d4be"></div>
  <div class="abs" style="left:358px;top:408.5px;width:224.5px;height:22.1px;background:#f1f1f1"></div>
  <div class="abs" style="left:299px;top:315px;width:295px;height:116px;border:1.3px solid #3c3c6c"></div>
  <div class="abs" style="left:299px;top:346px;width:295px;height:1px;background:#3c3c6c;opacity:.8"></div>
  <div class="abs" style="left:357.3px;top:316px;width:0;height:30px;border-left:1px dotted #c8c8d8"></div>
  <div class="abs" style="left:357.3px;top:346px;width:1px;height:84px;background:#3c3c6c;opacity:.8"></div>
  <div class="abs" style="left:460.5px;top:347px;width:0;height:83px;border-left:1px dotted #c9d3da"></div>
  <div class="abs" style="left:520.5px;top:347px;width:0;height:83px;border-left:1px dotted #c9d3da"></div>
  <div class="abs" style="left:582.5px;top:347px;width:0;height:83px;border-left:1px dotted #c9d3da"></div>
  <div class="t" style="left:440.3px;top:325.5px;font-family:'Liberation Serif',serif;font-size:10.85px;color:#4a4a6e">Text description</div>
  <div class="t" style="left:329.6px;top:388.3px;font-family:'Liberation Serif',serif;font-size:10.7px;font-weight:bold;color:#4a4a72;transform:translate(-50%,-50%) rotate(-90deg)">Text description</div>
  <div class="t" style="left:370.4px;top:354.9px;font-size:9.6px;color:#222">Parameter 1</div>
  <div class="t" style="left:489.3px;top:354.1px;font-size:10.6px;color:#222;transform:translateX(-50%)">45</div>
  <div class="t" style="left:555.3px;top:354.1px;font-size:10.6px;color:#222;transform:translateX(-50%)">5</div>
  <div class="t" style="left:370.4px;top:373.3px;font-size:9.6px;color:#222">Parameter 2</div>
  <div class="t" style="left:489.3px;top:372.5px;font-size:10.6px;color:#222;transform:translateX(-50%)">70</div>
  <div class="t" style="left:555.3px;top:372.5px;font-size:10.6px;color:#222;transform:translateX(-50%)">10</div>
  <div class="t" style="left:370.4px;top:394.4px;font-size:9.6px;color:#222">Parameter 3</div>
  <div class="t" style="left:489.3px;top:393.6px;font-size:10.6px;color:#222;transform:translateX(-50%);color:#3b7d8c;text-decoration:underline">155</div>
  <div class="t" style="left:555.3px;top:393.6px;font-size:10.6px;color:#222;transform:translateX(-50%)">5</div>
  <div class="t" style="left:370.4px;top:416.0px;font-size:9.6px;color:#222">Parameter 4</div>
  <div class="t" style="left:489.3px;top:415.2px;font-size:10.6px;color:#222;transform:translateX(-50%)">35</div>
  <div class="t" style="left:555.3px;top:415.2px;font-size:10.6px;color:#222;transform:translateX(-50%)">5-</div>

  </div>
  <div class="abs" style="left:777px;top:367px;width:86.5px;height:22px;background:#0f7f0f"></div>
  <div class="t" style="left:784.5px;top:372.3px;font-size:12px;font-weight:bold;color:#fff;letter-spacing:-0.15px">Henry Milton</div>
  <div class="abs" id="leftp"></div>
  
  <svg style="left:12.5px;top:146.5px" width="16" height="16" viewBox="0 0 16 16" fill="none" stroke="#444" stroke-width="1.1"><circle cx="5.8" cy="5.8" r="5.1"/><path d="M9.5 9.5 L14.8 14.6"/></svg>
  <svg style="left:12px;top:185.8px" width="19" height="16" viewBox="0 0 19 16" fill="none" stroke="#444" stroke-width="1.1"><path d="M0.6 0.6 H15.6 V11.8 H8.6 L6.2 14.4 L3.8 11.8 H0.6 Z"/><path d="M3 3.8 H13.2 M3 6.2 H13.2 M3 8.6 H9" stroke-width="1"/><rect x="8.2" y="8.8" width="10" height="6.4" rx="1" fill="#f6d24a" stroke="none"/><path d="M10.2 11 H16.2 M10.2 13 H16.2" stroke="#333" stroke-width="1.1"/></svg>
  <svg style="left:12px;top:225.6px" width="17" height="15" viewBox="0 0 17 15" fill="none" stroke="#444" stroke-width="1.1"><path d="M13.2 3.6 V0.6 H0.8 V9.6 L0.6 11.8 L3 9.8"/><path d="M4.4 4.6 H16.2 V13.2 L16.4 14.6 L13.8 12.8 H4.4 Z" fill="#f1f1f1"/><path d="M6.8 8.2 H8.6 V10 H6.8 Z M9.6 8.2 H11.4 V10 H9.6 Z M12.4 8.2 H14.2 V10 H12.4 Z" fill="#444" stroke="none"/></svg>
  <svg style="left:13.6px;top:265.4px" width="14" height="11" viewBox="0 0 14 11" fill="none" stroke="#333" stroke-width="1.25"><path d="M0.4 1.1 H9.4 M2.8 4.1 H11.3 M5.2 7.1 H13.4 M0.4 10.1 H9.4"/></svg>
  <svg style="left:11.8px;top:303.4px" width="16" height="13" viewBox="0 0 16 13" fill="none" stroke="#444" stroke-width="1.1"><path d="M0.6 4 H4.6 L9.6 0.8 V11.6 L4.6 8.4 H0.6 Z"/><path d="M3 8.6 V12"/><path d="M11.4 2.4 C13.4 4.4 13.4 8 11.4 10 M13.2 0.8 C16 3.8 16 8.6 13.2 11.6" stroke-width="1"/></svg>

  <div class="abs" id="rightp"></div>
  
  <div class="t" style="left:976px;top:146.6px;font-size:14.6px;font-weight:bold;color:#444">¶</div>
  <svg style="left:973.2px;top:188px" width="16" height="11" viewBox="0 0 16 11" fill="none" stroke="#b4b4b4" stroke-width="1"><rect x="0.5" y="0.5" width="15" height="10"/><path d="M0.5 2.2 H15.5" stroke-width="2"/><path d="M0.5 5.7 H15.5 M0.5 8.2 H15.5 M5.5 0.5 V10.5 M10.5 0.5 V10.5"/></svg>
  <svg style="left:974.2px;top:225px" width="14" height="14" viewBox="0 0 14 14" fill="none" stroke="#b4b4b4" stroke-width="1"><rect x="0.5" y="0.5" width="13" height="13"/><circle cx="3.8" cy="3.8" r="1.3"/><path d="M0.5 11.5 L4.6 7.6 L7 9.8 L10.4 6.4 L13.5 9.4"/></svg>
  <svg style="left:975px;top:263px" width="12" height="16" viewBox="0 0 12 16" fill="none" stroke="#b4b4b4" stroke-width="1"><rect x="0.5" y="0.5" width="11" height="15" rx="1"/><path d="M2.6 2.8 H9.4 M2.6 13.2 H9.4" stroke-width="1.6"/><path d="M2.6 10.6 H5.2" stroke-width=".8"/></svg>
  <svg style="left:973.6px;top:303.4px" width="15" height="15" viewBox="0 0 15 15" fill="none" stroke="#b4b4b4" stroke-width="1"><path d="M4.4 8 H0.5 V0.5 H9.4 V3.6"/><circle cx="9.2" cy="9.2" r="4.8"/></svg>
  <svg style="left:974px;top:342px" width="14" height="14" viewBox="0 0 14 14" fill="none" stroke="#b4b4b4" stroke-width="1"><rect x="0.5" y="8.6" width="3" height="4.9" rx=".6"/><rect x="5.5" y="5.2" width="3" height="8.3" rx=".6"/><rect x="10.5" y="0.5" width="3" height="13" rx=".6"/></svg>
  <div class="t" style="left:974.5px;top:379px;font-size:13px;color:#b4b4b4">T</div><div class="t" style="left:981.6px;top:382.5px;font-size:9.5px;color:#b4b4b4">a</div><svg style="left:975px;top:392.5px" width="12" height="4" viewBox="0 0 12 4" fill="none" stroke="#b4b4b4" stroke-width="1"><path d="M0.5 3.6 C3 0.4 9 0.4 11.5 3.6"/></svg>
  <svg style="left:973.5px;top:422px" width="15" height="11" viewBox="0 0 15 11" fill="none" stroke="#b4b4b4" stroke-width="1"><rect x="0.5" y="0.5" width="14" height="10"/><path d="M0.5 0.5 L7.5 6.4 L14.5 0.5 M0.5 10.5 L5.6 4.8 M14.5 10.5 L9.4 4.8"/></svg>

  <div class="abs" id="status"></div>
  
  <div class="t" style="left:40.2px;top:624.3px;font-size:11px;font-weight:bold;color:#444">Page 1 of 1</div>
  <div class="sep" style="left:505.5px;top:616px;height:24px;background:#d0d0d0"></div>
  <div class="sep" style="left:723.3px;top:616px;height:24px;background:#d0d0d0"></div>
  <div class="sep" style="left:757.4px;top:616px;height:24px;background:#d0d0d0"></div>
  <div class="t" style="left:518.3px;top:623.2px;font-size:11px;font-weight:bold;color:#444;letter-spacing:-0.08px">English (United States)</div>
  <svg style="left:642.6px;top:626px" width="6" height="4" viewBox="0 0 6 4" fill="none" stroke="#555" stroke-width="0.9"><path d="M0.4 3.4 L3 0.8 L5.6 3.4"/></svg>
  <svg style="left:660.6px;top:620.4px" width="16" height="16" viewBox="0 0 16 16" fill="none" stroke="#444" stroke-width="1"><circle cx="8" cy="8" r="7.4"/><ellipse cx="8" cy="8" rx="3.4" ry="7.4"/><path d="M8 0.6 V15.4 M0.6 8 H15.4 M1.8 4.2 H14.2 M1.8 11.8 H14.2"/></svg>
  <div class="abs" style="left:691px;top:617.6px;width:20.2px;height:20.2px;background:#7d858c"></div>
  <div class="t" style="left:693.2px;top:620px;font-size:8px;font-weight:bold;color:#fff;letter-spacing:0.1px;transform:scaleX(.95);transform-origin:0 0">ABC</div>
  <svg style="left:698px;top:628.2px" width="11" height="8" viewBox="0 0 11 8" fill="none" stroke="#fff" stroke-width="1.2"><path d="M0.6 3.6 L3.6 6.8 L10.4 0.6"/></svg>
  <svg style="left:733px;top:620px" width="16" height="16" viewBox="0 0 16 16" fill="none" stroke="#444" stroke-width="1.1"><path d="M11.4 8.6 V15.4 H0.6 V0.6 H11.4 V2.4"/><path d="M2.8 3.6 H9 M2.8 6.2 H7.8 M2.8 8.8 H6.4" stroke-width="1"/><path d="M6.2 13 L6.8 10.4 L13 4 L15 6 L8.8 12.4 Z" fill="#f1f1f1"/></svg>
  <svg style="left:773.6px;top:620.6px" width="14" height="16" viewBox="0 0 14 16" fill="none" stroke="#444" stroke-width="1"><rect x="0.5" y="0.5" width="13" height="15"/><path d="M7 2.4 V13.6 M2 8 H12 M5 4.4 L7 2.4 L9 4.4 M5 11.6 L7 13.6 L9 11.6 M4 6 L2 8 L4 10 M10 6 L12 8 L10 10"/></svg>
  <svg style="left:803.6px;top:622.2px" width="18" height="12" viewBox="0 0 18 12" fill="none" stroke="#444" stroke-width="1"><path d="M0.6 0 V12 M17.4 0 V12 M3.4 6 H14.6 M5.8 3.6 L3.4 6 L5.8 8.4 M12.2 3.6 L14.6 6 L12.2 8.4"/></svg>
  <div class="abs" style="left:833.8px;top:617.8px;width:20.2px;height:20.2px;background:#e0e0e0;border-radius:1px"></div>
  <div class="abs" style="left:839px;top:628px;width:10px;height:1px;background:#444"></div>
  <div class="t" style="left:868.6px;top:623.2px;font-size:11px;font-weight:bold;color:#444;letter-spacing:0.1px">Zoom 80%</div>
  <svg style="left:944.8px;top:623px" width="11" height="11" viewBox="0 0 11 11" fill="none" stroke="#444" stroke-width="1"><path d="M0 5.5 H11 M5.5 0 V11"/></svg>

</div>

<div class="abs" style="left:775.5px;top:66.6px;width:159.6px;height:78px;background:#fff;border-radius:3px;box-shadow:0 1px 6px rgba(0,0,0,.2),0 0 0 0.5px rgba(0,0,0,.1)"></div>
<svg style="left:789.0px;top:79.7px" width="24" height="24" viewBox="0 0 24 24">
<clipPath id="cf1"><circle cx="12" cy="12" r="11.3"/></clipPath>
<g filter="url(#avb)" clip-path="url(#cf1)"><rect width="24" height="24" fill="#e2cfae"/>
<path d="M1 24 C0 11 4 1 12 1 S24 10 23 24 Z" fill="#d8b98c"/>
<path d="M14.5 2.4 C21.5 4.6 23 14 20.6 23 L17.2 23 C19.6 15.6 18.6 8 14.5 2.4 Z" fill="#ead9bb"/>
<path d="M3.4 22 C2.2 14 4 6 9 3 C6.6 8 6 15 6.8 22 Z" fill="#c9a777"/>
<ellipse cx="11.8" cy="12.2" rx="5.9" ry="7.6" fill="#e3bb9e"/>
<path d="M5.4 9.6 C6.6 3.6 14.6 2.6 18 8.4 C14.6 6.2 9.2 6.4 5.4 9.6 Z" fill="#dcc196"/>
<path d="M7 22 C9 19.6 14.6 19.6 16.8 22 L17.4 24 H6.2 Z" fill="#d2a58c"/>
<path d="M8.6 11 H10.8 M13 11 H15.2" stroke="#6f5646" stroke-width=".9"/><path d="M11.9 11.6 V14.2" stroke="#cf9f86" stroke-width=".8"/><path d="M10.2 16.3 Q11.9 17.2 13.6 16.3" stroke="#b2675a" stroke-width=".9" fill="none"/></g>
<circle cx="12" cy="12" r="11.4" fill="none" stroke="#ee7d4b" stroke-width="1.2"/></svg>
<svg style="left:789.0px;top:108.2px" width="24" height="24" viewBox="0 0 24 24">
<clipPath id="cm2"><circle cx="12" cy="12" r="11.3"/></clipPath>
<g filter="url(#avb)" clip-path="url(#cm2)"><rect width="24" height="24" fill="#d3d8de"/>
<path d="M0 0 H13 L9 24 H0 Z" fill="#4a4e57"/>
<path d="M13.6 24 L14.6 17.4 C18 16 22 17 24 19 V24 Z" fill="#1b1c22"/>
<path d="M4.2 10 C3.4 3.6 8.6 1.2 12.6 1.8 C16.8 2.4 18.6 6 17.6 10.6 L16.2 13.4 L5.4 13.4 Z" fill="#1a1819"/>
<path d="M6.4 8.8 C8 6.2 13.2 5.8 15.6 8 L15.8 14 C15.2 18 13.2 20.4 11.2 20.4 S7 18 6.4 14 Z" fill="#c69679"/>
<path d="M6.4 12.6 C7 15 8.4 15.2 11.2 15.2 S15.2 15 15.8 12.6 C16.2 17.6 14.2 21.4 11.2 21.4 S6 17.8 6.4 12.6 Z" fill="#2b2320"/>
<path d="M9.6 16.2 Q11.2 15.6 12.8 16.2 Q11.2 17.4 9.6 16.2 Z" fill="#8a5e52"/>
<path d="M8 10.2 H10.2 M12.4 10.2 H14.6" stroke="#2a201c" stroke-width=".9"/>
<path d="M7 21.6 L11.2 21 L15.2 21.6 L17 24 H5 Z" fill="#dcdcdc"/></g>
<circle cx="12" cy="12" r="11.4" fill="none" stroke="#3f9de0" stroke-width="1.2"/></svg>
<div class="t" style="left:819.4px;top:87.6px;font-size:11.5px;font-weight:bold;color:#444;letter-spacing:-0.3px">Elizabeth Ryan</div>
<div class="t" style="left:819.4px;top:115.4px;font-size:11.5px;font-weight:bold;color:#444;letter-spacing:-0.04px">Henry Milton</div>
<div class="abs" style="left:-6px;top:332.3px;width:253px;height:214px;background:#fff;border-radius:5px;box-shadow:0 1px 6px rgba(0,0,0,.18)"></div>
<svg style="left:247px;top:381.5px" width="10" height="17" viewBox="0 0 10 17"><path d="M0 0 L9.4 8.5 L0 17 Z" fill="#fff"/></svg>
<svg style="left:10.9px;top:347.7px" width="24" height="24" viewBox="0 0 24 24">
<clipPath id="cf3"><circle cx="12" cy="12" r="11.3"/></clipPath>
<g filter="url(#avb)" clip-path="url(#cf3)"><rect width="24" height="24" fill="#e2cfae"/>
<path d="M1 24 C0 11 4 1 12 1 S24 10 23 24 Z" fill="#d8b98c"/>
<path d="M14.5 2.4 C21.5 4.6 23 14 20.6 23 L17.2 23 C19.6 15.6 18.6 8 14.5 2.4 Z" fill="#ead9bb"/>
<path d="M3.4 22 C2.2 14 4 6 9 3 C6.6 8 6 15 6.8 22 Z" fill="#c9a777"/>
<ellipse cx="11.8" cy="12.2" rx="5.9" ry="7.6" fill="#e3bb9e"/>
<path d="M5.4 9.6 C6.6 3.6 14.6 2.6 18 8.4 C14.6 6.2 9.2 6.4 5.4 9.6 Z" fill="#dcc196"/>
<path d="M7 22 C9 19.6 14.6 19.6 16.8 22 L17.4 24 H6.2 Z" fill="#d2a58c"/>
<path d="M8.6 11 H10.8 M13 11 H15.2" stroke="#6f5646" stroke-width=".9"/><path d="M11.9 11.6 V14.2" stroke="#cf9f86" stroke-width=".8"/><path d="M10.2 16.3 Q11.9 17.2 13.6 16.3" stroke="#b2675a" stroke-width=".9" fill="none"/></g>
<circle cx="12" cy="12" r="11.4" fill="none" stroke="#ee7d4b" stroke-width="1.2"/></svg>
<div class="t" style="left:43.2px;top:353.8px;font-size:12px;font-weight:bold;color:#333">Elizabeth Ryan</div>
<svg style="left:193.8px;top:355px" width="13" height="10" viewBox="0 0 13 10" fill="none" stroke="#333" stroke-width="1.9"><path d="M0.8 5 L4.4 8.6 L12.2 0.8"/></svg>
<svg style="left:218.5px;top:355px" width="11" height="10" viewBox="0 0 11 10" fill="none" stroke="#333" stroke-width="1.8"><path d="M0.8 0.6 L10.2 9.4 M10.2 0.6 L0.8 9.4"/></svg>
<div class="t" style="left:11px;top:376.8px;font-size:12px;color:#999">2024/07/17 1:05 PM</div>
<div class="t" style="left:11px;top:400px;font-size:12px;color:#444">Sounds a bit pompous, doesn&#39;t it?</div>
<svg style="left:11px;top:430px" width="8" height="9" viewBox="0 0 8 9" fill="none" stroke="#333" stroke-width="1.3"><path d="M0.5 0 V6 H7 M4.8 3.8 L7 6 L4.8 8.2"/></svg>
<svg style="left:27.2px;top:429.9px" width="24" height="24" viewBox="0 0 24 24">
<clipPath id="cm4"><circle cx="12" cy="12" r="11.3"/></clipPath>
<g filter="url(#avb)" clip-path="url(#cm4)"><rect width="24" height="24" fill="#d3d8de"/>
<path d="M0 0 H13 L9 24 H0 Z" fill="#4a4e57"/>
<path d="M13.6 24 L14.6 17.4 C18 16 22 17 24 19 V24 Z" fill="#1b1c22"/>
<path d="M4.2 10 C3.4 3.6 8.6 1.2 12.6 1.8 C16.8 2.4 18.6 6 17.6 10.6 L16.2 13.4 L5.4 13.4 Z" fill="#1a1819"/>
<path d="M6.4 8.8 C8 6.2 13.2 5.8 15.6 8 L15.8 14 C15.2 18 13.2 20.4 11.2 20.4 S7 18 6.4 14 Z" fill="#c69679"/>
<path d="M6.4 12.6 C7 15 8.4 15.2 11.2 15.2 S15.2 15 15.8 12.6 C16.2 17.6 14.2 21.4 11.2 21.4 S6 17.8 6.4 12.6 Z" fill="#2b2320"/>
<path d="M9.6 16.2 Q11.2 15.6 12.8 16.2 Q11.2 17.4 9.6 16.2 Z" fill="#8a5e52"/>
<path d="M8 10.2 H10.2 M12.4 10.2 H14.6" stroke="#2a201c" stroke-width=".9"/>
<path d="M7 21.6 L11.2 21 L15.2 21.6 L17 24 H5 Z" fill="#dcdcdc"/></g>
<circle cx="12" cy="12" r="11.4" fill="none" stroke="#3f9de0" stroke-width="1.2"/></svg>
<div class="t" style="left:59.4px;top:435.6px;font-size:12px;font-weight:bold;color:#333">Henry Milton</div>
<svg style="left:193.8px;top:437px" width="13" height="10" viewBox="0 0 13 10" fill="none" stroke="#333" stroke-width="1.9"><path d="M0.8 5 L4.4 8.6 L12.2 0.8"/></svg>
<svg style="left:218.5px;top:437px" width="11" height="10" viewBox="0 0 11 10" fill="none" stroke="#333" stroke-width="1.8"><path d="M0.8 0.6 L10.2 9.4 M10.2 0.6 L0.8 9.4"/></svg>
<div class="t" style="left:27.3px;top:458.5px;font-size:12px;color:#999">2024/07/17 2:22 PM</div>
<div class="t" style="left:27.3px;top:483.6px;font-size:12px;color:#444">Yeah, I agree. Let&#39;s make it clearer.</div>
<div class="t" style="left:11px;top:515.8px;font-size:12px;color:#444">Add Reply</div>
<div class="abs" style="left:11px;top:529.6px;width:56px;height:1px;background:repeating-linear-gradient(90deg,#444 0,#444 2px,transparent 2px,transparent 4px)"></div>

</body>
</html>
